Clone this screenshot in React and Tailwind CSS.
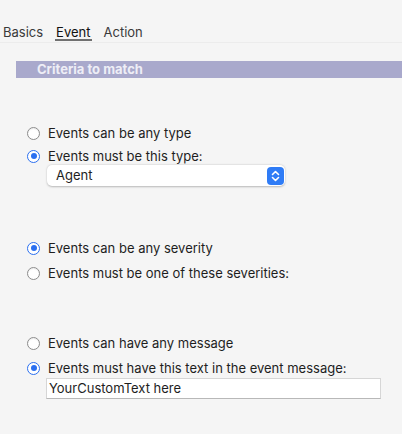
import React from "react";

function Radio({ checked }) {
  return checked ? (
    <span className="flex items-center justify-center w-[13px] h-[13px] rounded-full border-[1.5px] border-[#2a6ff0] bg-white shrink-0">
      <span className="w-[6px] h-[6px] rounded-full bg-[#2a6ff0]" />
    </span>
  ) : (
    <span className="w-[13px] h-[13px] rounded-full border border-[#8c8c8c] bg-white shrink-0 shadow-[inset_0_1px_1px_rgba(0,0,0,0.08)]" />
  );
}

function Row({ checked, children }) {
  return (
    <div className="flex items-center h-[18px] pl-[27px] gap-[8px]">
      <Radio checked={checked} />
      <span className="text-[13px] text-[#1e1e1e] leading-none">{children}</span>
    </div>
  );
}

export default function App() {
  return (
    <div
      className="w-[402px] h-[434px] bg-[#f5f5f5] overflow-hidden"
      style={{ fontFamily: "Inter, 'Noto Sans', sans-serif" }}
    >
      {/* Tabs */}
      <div className="flex items-end h-[43px] border-b border-[#ececec] pl-[3px] text-[13px] text-[#3a3a3a]">
        <span className="pb-[3px] leading-none">Basics</span>
        <span className="ml-[12px] mb-[1px] px-[1px] border-b-2 border-[#707070] text-[#111] leading-none">
          <span className="block">Event</span>
        </span>
        <span className="ml-[12px] pb-[3px] leading-none">Action</span>
      </div>

      {/* Header bar */}
      <div className="mt-[18px] ml-[16px] h-[17px] bg-[#a9a9cc] flex items-center pl-[21px]">
        <span className="text-[13px] font-bold text-[#eeeef6] leading-none">Criteria to match</span>
      </div>

      {/* Group 1 */}
      <div className="mt-[46px] flex flex-col gap-[5px]">
        <Row>Events can be any type</Row>
        <Row checked>Events must be this type:</Row>
      </div>
      <div className="ml-[47px] mt-0 w-[238px] h-[21px] bg-white rounded-[5px] shadow-[0_0.5px_2px_rgba(0,0,0,0.25)] flex items-center justify-between pl-[9px] pr-[1px]">
        <span className="text-[13px] text-[#1e1e1e] leading-none">Agent</span>
        <span className="w-[17px] h-[18px] rounded-[4px] bg-[#2f7cf6] flex items-center justify-center">
          <svg width="9" height="12" viewBox="0 0 9 12" fill="none">
            <path d="M1.5 4.5 L4.5 1.5 L7.5 4.5" stroke="white" strokeWidth="1.6" strokeLinecap="round" strokeLinejoin="round" />
            <path d="M1.5 7.5 L4.5 10.5 L7.5 7.5" stroke="white" strokeWidth="1.6" strokeLinecap="round" strokeLinejoin="round" />
          </svg>
        </span>
      </div>

      {/* Group 2 */}
      <div className="mt-[53px] flex flex-col gap-[7px]">
        <Row checked>Events can be any severity</Row>
        <Row>Events must be one of these severities:</Row>
      </div>

      {/* Group 3 */}
      <div className="mt-[52px] flex flex-col gap-[7px]">
        <Row>Events can have any message</Row>
        <Row checked>Events must have this text in the event message:</Row>
      </div>
      <div className="ml-[46px] mt-[1px] w-[335px] h-[21px] bg-white border border-[#d6d6d6] border-b-[#b8b8b8] flex items-center pl-[2px]">
        <span className="text-[13px] text-[#1e1e1e] leading-none">YourCustomText here</span>
      </div>
    </div>
  );
}
